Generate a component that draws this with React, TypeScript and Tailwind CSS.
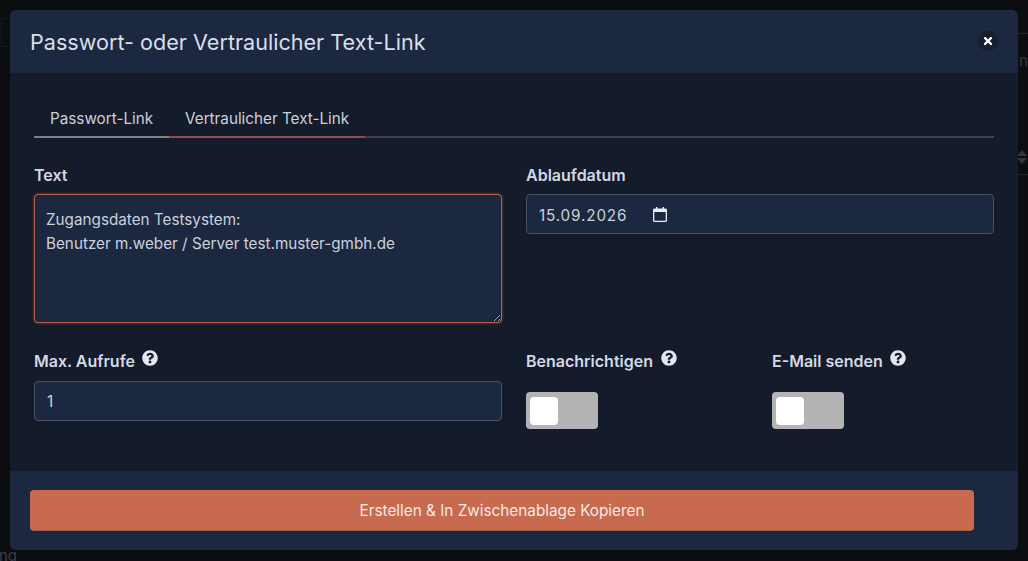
import { FaQuestionCircle, FaTimes } from "react-icons/fa";

const font = { fontFamily: "Inter, sans-serif" };

function Label({ children, help }: { children: string; help?: boolean }) {
  return (
    <div className="flex h-[24px] items-center gap-[7.5px] text-[16px] font-semibold leading-[24px] text-[#d3d9e4]">
      <span className="mb-[2px]">{children}</span>
      {help && <FaQuestionCircle className="mt-[-8px] h-[16px] w-[16px] text-[#e2e8f0]" />}
    </div>
  );
}

function Toggle() {
  return (
    <div className="flex h-[37px] w-[72px] items-center rounded-[4px] bg-[#b4b4b4] pl-[4px]">
      <div className="h-[28px] w-[28px] rounded-[4px] bg-white" />
    </div>
  );
}

export default function App() {
  return (
    <div
      className="relative h-[561px] w-[1028px] overflow-hidden bg-[#0b0d10] px-[10px] pt-[10px]"
      style={font}
    >
      <div className="absolute left-[1px] top-[18px] h-[29px] w-[12px] border border-[#15181c]" />
      <div className="absolute left-[1018px] top-[33px] h-px w-[10px] bg-[#24272b]" />
      <div className="absolute left-[1019px] top-[50px] text-[15px] text-[#33373c]">n</div>
      <div className="absolute left-[1018px] top-[174px] h-px w-[10px] bg-[#24272b]" />
      <div className="absolute left-[1017px] top-[150px] h-0 w-0 border-x-[5px] border-b-[6px] border-x-transparent border-b-[#33373c]" />
      <div className="absolute left-[1017px] top-[158px] h-0 w-0 border-x-[5px] border-t-[6px] border-x-transparent border-t-[#33373c]" />
      <div className="absolute bottom-[-6px] left-[-1px] text-[15px] text-[#3a3e44]">ng</div>

      <div className="relative flex h-[540px] w-[1008px] flex-col overflow-hidden rounded-[6px] bg-[#141b2b]">
        <header className="flex h-[63px] shrink-0 items-center justify-between bg-[#1c2840] pl-[20px] pr-[20px]">
          <h1 className="text-[21.6px] font-normal leading-[64px] text-[#d9dfe8]">
            Passwort- oder Vertraulicher Text-Link
          </h1>
          <button className="mt-[-1px] flex h-[20px] w-[20px] items-center justify-center rounded-full bg-[#161e30] text-white">
            <FaTimes className="h-[12px] w-[12px]" />
          </button>
        </header>

        <main className="flex-1 px-[24px] pt-[27px]">
          <div className="flex h-[38px] border-b-2 border-[#3a4150] text-[15.25px] leading-[38px] text-[#cbd1da]">
            <div className="mb-[-2px] h-[38px] w-[135px] border-b-2 border-[#7d8188] pl-[16px]">Passwort-Link</div>
            <div className="mb-[-2px] h-[38px] w-[196px] border-b-2 border-[#8f4f40] pl-[16px]">
              Vertraulicher Text-Link
            </div>
          </div>

          <div className="mt-[26px] grid grid-cols-[468px_468px] gap-x-[24px]">
            <div>
              <Label>Text</Label>
              <textarea
                readOnly
                className="mt-[6px] block h-[129px] w-full rounded-[4px] border-[1.5px] border-[#b9614a] bg-[#1c2840] px-[11px] pb-[12px] pt-[13px] text-[15.25px] leading-[24px] text-[#cbd1da] shadow-[0_0_0_1.5px_#3a2a2c] outline-none"
                defaultValue={"Zugangsdaten Testsystem:\nBenutzer m.weber / Server test.muster-gmbh.de"}
              />
            </div>
            <div>
              <Label>Ablaufdatum</Label>
              <div className="mt-[6px] flex h-[40px] items-center gap-[26px] rounded-[4px] border border-[#4a5160] bg-[#1c2840] pl-[12px] text-[15.25px] tracking-[0.85px] text-[#cbd1da]">
                <span className="pt-[4px]">15.09.2026</span>
                <svg width="14" height="15" viewBox="0 0 14 15" className="text-[#e8ecf2]">
                  <path
                    fill="currentColor"
                    d="M3 0h1.400v1.500h5.200V0H11v1.500h1.500A1.500 1.500 0 0 1 14 3v10.500a1.500 1.500 0 0 1-1.500 1.500h-11A1.500 1.500 0 0 1 0 13.500V3a1.500 1.500 0 0 1 1.500-1.500H3V0zM1.300 5v8.200c0 .3.200.5.500.5h10.400c.3 0 .5-.2.500-.5V5H1.300z"
                  />
                </svg>
              </div>
            </div>
          </div>

          <div className="mt-[27px] grid grid-cols-[468px_222px_222px] gap-x-[24px]">
            <div>
              <Label help>Max. Aufrufe</Label>
              <input
                readOnly
                defaultValue="1"
                className="mt-[7px] block h-[40px] w-full rounded-[4px] border border-[#4a5160] bg-[#1c2840] px-[12px] text-[15.25px] text-[#cbd1da] outline-none"
              />
            </div>
            <div>
              <Label help>Benachrichtigen</Label>
              <div className="mt-[18px]">
                <Toggle />
              </div>
            </div>
            <div>
              <Label help>E-Mail senden</Label>
              <div className="mt-[18px]">
                <Toggle />
              </div>
            </div>
          </div>
        </main>

        <footer className="h-[79px] shrink-0 bg-[#1c2840] pl-[20px] pt-[19px]">
          <button className="h-[41px] w-[944px] rounded-[4px] border-b border-[#a85a45] bg-[#c76a4f] pt-[3px] text-[15.3px] text-[#f5e9e4]">
            Erstellen &amp; In Zwischenablage Kopieren
          </button>
        </footer>
      </div>
    </div>
  );
}
